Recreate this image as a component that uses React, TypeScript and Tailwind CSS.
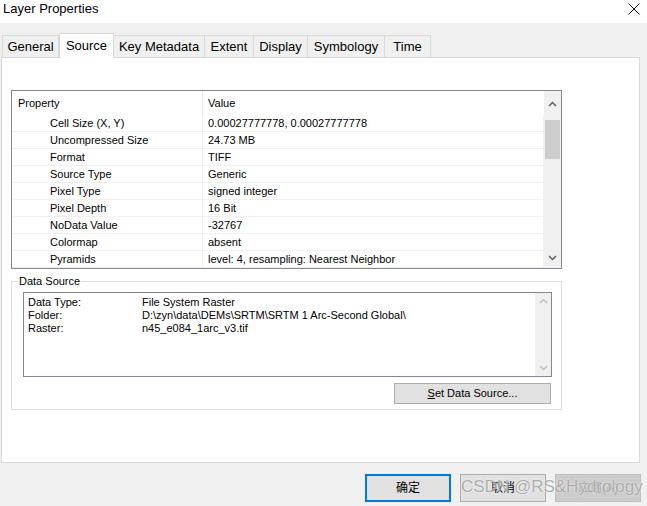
import React from "react";

const rows: [string, string][] = [
  ["Cell Size (X, Y)", "0.00027777778, 0.00027777778"],
  ["Uncompressed Size", "24.73 MB"],
  ["Format", "TIFF"],
  ["Source Type", "Generic"],
  ["Pixel Type", "signed integer"],
  ["Pixel Depth", "16 Bit"],
  ["NoData Value", "-32767"],
  ["Colormap", "absent"],
  ["Pyramids", "level: 4, resampling: Nearest Neighbor"],
];

const tabs = [
  { label: "General", w: "w-[57px]" },
  { label: "Source", w: "w-[55px]", active: true },
  { label: "Key Metadata", w: "w-[91px]" },
  { label: "Extent", w: "w-[49px]" },
  { label: "Display", w: "w-[54px]" },
  { label: "Symbology", w: "w-[77px]" },
  { label: "Time", w: "w-[46px]" },
];

function Chevron({ up, color }: { up?: boolean; color: string }) {
  return (
    <svg width="9" height="6" viewBox="0 0 9 6">
      <path
        d={up ? "M1 5 L4.5 1.5 L8 5" : "M1 1 L4.5 4.5 L8 1"}
        fill="none"
        stroke={color}
        strokeWidth="1.5"
      />
    </svg>
  );
}

export default function App() {
  return (
    <div
      className="relative w-[647px] h-[506px] bg-[#f0f0f0] flex flex-col text-black overflow-hidden"
      style={{ fontFamily: '"Liberation Sans", "Noto Sans CJK SC", sans-serif' }}
    >
      {/* title bar */}
      <div className="h-[23px] bg-white flex justify-between">
        <div className="pl-[3px] pt-[1px] text-[13px] leading-[16px]">Layer Properties</div>
        <svg width="12" height="12" viewBox="0 0 12 12" className="mt-[3px] mr-[7px]">
          <path d="M0.5 0.5 L11.5 11.5 M11.5 0.5 L0.5 11.5" stroke="#111" strokeWidth="1" />
        </svg>
      </div>

      {/* tabs */}
      <div className="h-[34px] flex items-end pl-[2px] relative z-10">
        {tabs.map((t) =>
          t.active ? (
            <div
              key={t.label}
              className={`${t.w} h-[25px] -mb-[1px] bg-white border border-b-0 border-[#d9d9d9] flex items-center justify-center text-[13px] pb-[1px]`}
            >
              {t.label}
            </div>
          ) : (
            <div
              key={t.label}
              className={`${t.w} h-[22px] bg-[#f0f0f0] border border-b-0 border-l-0 first:border-l border-[#d9d9d9] flex items-center justify-center text-[13px]`}
            >
              {t.label}
            </div>
          )
        )}
      </div>

      {/* panel */}
      <div className="ml-[1px] w-[639px] h-[406px] bg-white border border-[#d9d9d9] pt-[32px] pl-[9px] flex flex-col text-[11px]">
        {/* property list */}
        <div className="w-[551px] h-[179px] border border-[#828790] flex">
          <div className="flex-1 flex flex-col">
            <div className="h-[24px] flex items-center">
              <div className="w-[191px] h-full pl-[6px] flex items-center border-r border-[#e5e5e5]">Property</div>
              <div className="pl-[5px]">Value</div>
            </div>
            {rows.map(([k, v]) => (
              <div key={k} className="h-[17px] flex items-center border-b border-[#f0f0f0] border-r">
                <div className="w-[191px] h-full pl-[38px] flex items-center border-r border-[#f0f0f0]">{k}</div>
                <div className="pl-[5px] whitespace-nowrap">{v}</div>
              </div>
            ))}
          </div>
          <div className="w-[17px] bg-[#f0f0f0] flex flex-col items-center">
            <div className="h-[17px] mt-[4px] flex items-center">
              <Chevron up color="#606060" />
            </div>
            <div className="w-[15px] h-[39px] mt-[8px] bg-[#cdcdcd]" />
            <div className="flex-1" />
            <div className="h-[17px] mb-[2px] flex items-center">
              <Chevron color="#606060" />
            </div>
          </div>
        </div>

        {/* data source group */}
        <div className="relative w-[551px] h-[129px] mt-[12px] border border-[#dcdcdc] pt-[10px] pl-[11px] flex flex-col">
          <div className="absolute -top-[8px] left-[6px] bg-white px-[1px] leading-[14px]">Data Source</div>
          <div className="w-[529px] h-[85px] border border-[#828790] flex">
            <div className="flex-1 pl-[4px] pt-[3px] leading-[13px]">
              <div className="flex">
                <div className="w-[114px]">Data Type:</div>
                <div>File System Raster</div>
              </div>
              <div className="flex">
                <div className="w-[114px]">Folder:</div>
                <div>D:\zyn\data\DEMs\SRTM\SRTM 1 Arc-Second Global\</div>
              </div>
              <div className="flex">
                <div className="w-[114px]">Raster:</div>
                <div>n45_e084_1arc_v3.tif</div>
              </div>
            </div>
            <div className="w-[16px] bg-[#f0f0f0] flex flex-col items-center justify-between py-[5px]">
              <Chevron up color="#c0c0c0" />
              <Chevron color="#c0c0c0" />
            </div>
          </div>
          <div className="flex justify-end pr-[10px] mt-[6px]">
            <div className="w-[157px] h-[21px] bg-[#e1e1e1] border border-[#adadad] flex items-center justify-center text-[11px]">
              <span>
                <span className="underline">S</span>et Data Source...
              </span>
            </div>
          </div>
        </div>
      </div>

      {/* buttons */}
      <div className="flex justify-end gap-[9px] pr-[6px] pt-[11px] text-[12px]">
        <div className="w-[86px] h-[28px] bg-[#e1e1e1] border-2 border-[#0078d7] flex items-center justify-center">确定</div>
        <div className="w-[86px] h-[28px] bg-[#e1e1e1] border border-[#adadad] flex items-center justify-center">取消</div>
        <div className="w-[86px] h-[28px] bg-[#cccccc] border border-[#bfbfbf] flex items-center justify-center text-[#a8a8a8]">
          应用(A)
        </div>
      </div>

      {/* watermark */}
      <div
        className="absolute left-[461px] top-[476px] text-[17px] leading-[22px] text-[#9a9a9a]/80 whitespace-nowrap pointer-events-none"
        style={{ textShadow: "0 0 2px #ffffff" }}
      >
        CSDN @RS&amp;Hydrology
      </div>
    </div>
  );
}
